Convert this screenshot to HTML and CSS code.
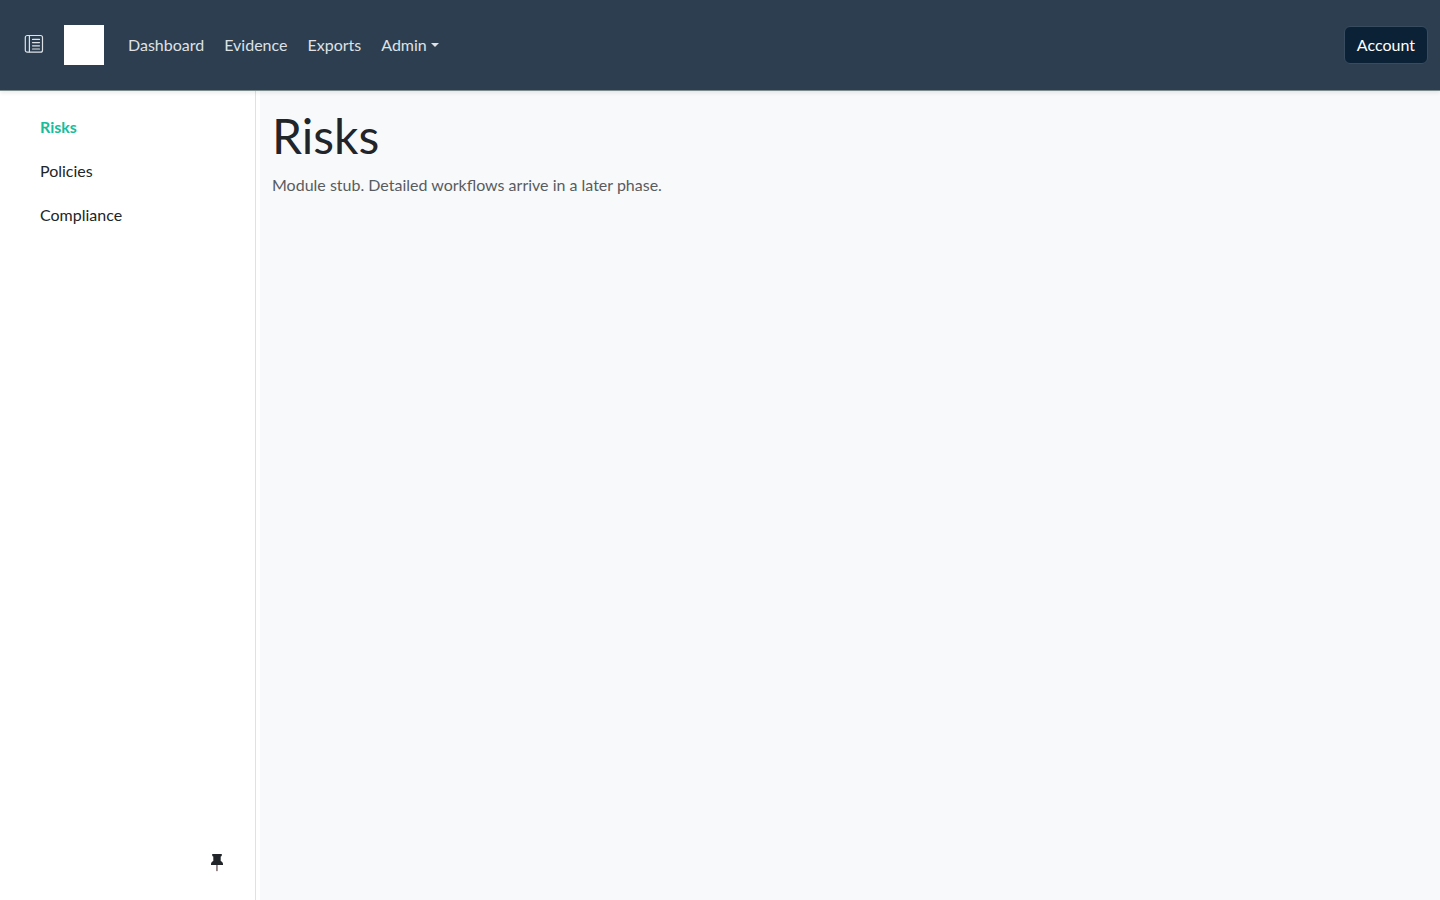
FILE: index.html
```
<!DOCTYPE html>
<html lang="en">
<head>
<meta charset="utf-8">
<meta name="viewport" content="width=device-width, initial-scale=1">
<title>Risks</title>
<link rel="stylesheet" href="styles.css">
</head>
<body>
<header class="topbar">
  <button class="menu-toggle" type="button" aria-label="Toggle sidebar">
    <svg width="20" height="20" viewBox="0 0 20 20" fill="none" stroke="currentColor" aria-hidden="true">
      <rect x="1.300" y="1.500" width="17.200" height="16.700" rx="2" stroke-width="1.200"/>
      <path d="M5.400 1.500v16.700" stroke-width="1.200"/>
      <path d="M8.500 5.400h7M8.500 8.600h7M8.500 11.800h7M8.500 15h7" stroke-width="1.200" stroke-linecap="round"/>
    </svg>
  </button>
  <a class="brand" href="#" aria-label="Home"></a>
  <nav class="main-nav">
    <a href="#">Dashboard</a>
    <a href="#">Evidence</a>
    <a href="#">Exports</a>
    <button class="dropdown" type="button">Admin</button>
  </nav>
  <button class="account" type="button">Account</button>
</header>
<div class="shell">
  <aside class="sidebar">
    <nav class="side-nav">
      <a class="active" href="#">Risks</a>
      <a href="#">Policies</a>
      <a href="#">Compliance</a>
    </nav>
    <button class="pin" type="button" aria-label="Pin sidebar">
      <svg width="16" height="20" viewBox="0 0 16 20" aria-hidden="true">
        <path fill="#212529" d="M3.200 1h9.600v1.200c0 .7-.5 1.100-1.100 1.400v4.500c1.300.6 2.300 1.700 2.300 3.100v.8H2v-.8c0-1.400 1-2.500 2.300-3.100V3.600C3.700 3.300 3.200 2.900 3.200 2.200z"/>
        <path fill="#665055" d="M7.300 12h1.300v5.500l-.6 1-.7-1z"/>
      </svg>
    </button>
  </aside>
  <main class="content">
    <h1>Risks</h1>
    <p>Module stub. Detailed workflows arrive in a later phase.</p>
  </main>
</div>
</body>
</html>
```
FILE: styles.css
```
* { box-sizing: border-box; }
body {
  margin: 0;
  min-height: 100vh;
  display: flex;
  flex-direction: column;
  font: 16px/24px Lato, sans-serif;
  color: #212529;
  background: #fff;
}
a { color: inherit; text-decoration: none; }
button { font: inherit; color: inherit; background: none; border: 0; padding: 0; cursor: pointer; }
svg { display: block; }
.topbar {
  position: relative;
  z-index: 1;
  display: flex;
  align-items: center;
  padding: 25px 12px;
  background: #2c3e50;
  border-bottom: 1px solid #7b8a8b;
  box-shadow: 0 2px 4px rgba(0, 0, 0, 0.08);
}
.menu-toggle { padding: 8px 12px 10px; color: #dee2e6; }
.brand { width: 40px; height: 40px; margin: 0 14px 0 8px; background: #fff; }
.main-nav { display: flex; flex: 1; color: #dee2e6; }
.main-nav a, .dropdown { padding: 8px 10px; }
.dropdown::after {
  content: "";
  display: inline-block;
  margin-left: 4px;
  vertical-align: 4px;
  border: 4px solid transparent;
  border-top-color: currentColor;
  border-bottom: 0;
}
.account {
  margin: -1px 0;
  padding: 6px 12px;
  border: 1px solid #384c5f;
  border-radius: 6px;
  background: #0b2236;
  color: #fff;
}
.shell { display: flex; flex: 1; gap: 4px; }
.sidebar {
  display: flex;
  flex-direction: column;
  justify-content: space-between;
  flex: none;
  width: 256px;
  padding: 16px 24px;
  background: #fff;
  border-right: 1px solid #dee2e6;
}
.side-nav { display: flex; flex-direction: column; gap: 4px; }
.side-nav a { padding: 8px 16px; }
.side-nav .active { color: #18bc9c; font-weight: 700; }
.pin { align-self: flex-end; padding: 11px 6px; }
.content { flex: 1; padding: 16px 12px; background: #f8f9fa; }
h1 { margin: 0 0 8px; font-size: 48px; line-height: 58px; font-weight: 400; }
p { margin: 0; color: #595c5f; }
```
